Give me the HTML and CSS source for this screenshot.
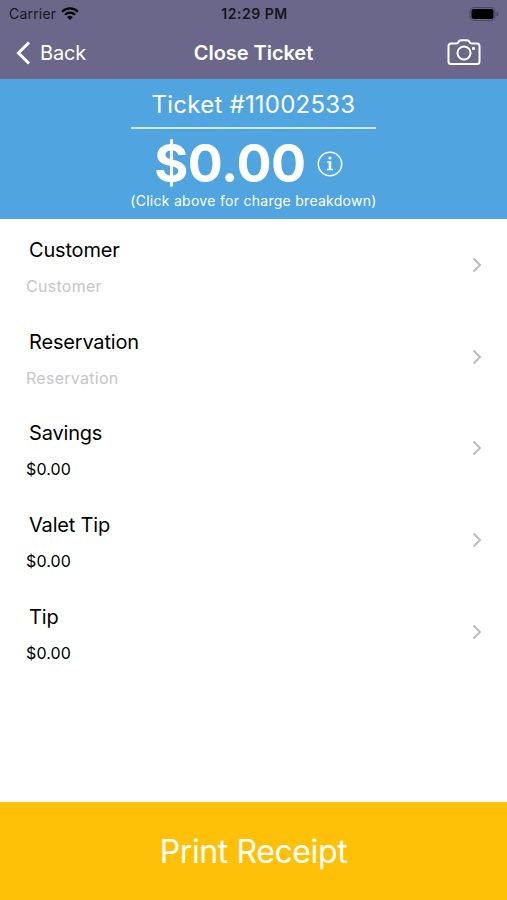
FILE: index.html
```html
<!DOCTYPE html>
<html lang="en">
<head>
<meta charset="utf-8">
<title>Close Ticket</title>
<link rel="stylesheet" href="styles.css">
</head>
<body>
<div class="app">
  <header class="top">
    <div class="status">
      <div class="carrier"><span>Carrier</span>
        <svg width="18" height="13" viewBox="0 0 18 13"><path d="M9 13 6.2 10.2a4 4 0 0 1 5.6 0z"/><path class="arc" d="M4 7.7a7.1 7.1 0 0 1 10 0M1.1 4.7a11.2 11.2 0 0 1 15.8 0"/></svg>
      </div>
      <span class="time">12:29 PM</span>
      <svg class="battery" width="31" height="14" viewBox="0 0 31 14"><rect class="case" x="1" y=".5" width="25" height="13" rx="4"/><rect x="2.500" y="2" width="22" height="10" rx="2.5"/><path class="cap" d="M27.500 4.5c2.800.9 2.800 4.1 0 5z"/></svg>
    </div>
    <nav class="nav">
      <div class="back"><svg width="15" height="24" viewBox="0 0 15 24"><path d="M13 1.5 2.5 12 13 22.5"/></svg><span>Back</span></div>
      <h1>Close Ticket</h1>
      <svg class="camera" width="34" height="27" viewBox="0 0 34 27"><path d="M4 4.500h5.500c1 0 1.500-.5 2-1.500.6-1.200 1.200-1.800 2.500-1.800h6c1.300 0 1.900.6 2.500 1.800.5 1 1 1.500 2 1.500H30A2.500 2.500 0 0 1 32.500 7v15.500A2.500 2.500 0 0 1 30 25H4a2.500 2.500 0 0 1-2.500-2.500V7A2.500 2.500 0 0 1 4 4.500z"/><circle cx="17" cy="14" r="6.500"/><rect class="dot" x="25" y="8" width="3" height="3" rx="1"/></svg>
    </nav>
  </header>
  <section class="ticket">
    <div class="number">Ticket #11002533</div>
    <div class="amount"><span>$0.00</span><svg width="26" height="26" viewBox="0 0 26 26"><circle cx="13" cy="13" r="11.700"/><path d="M10.300 11H12.800V18M10 18.500h6"/><path class="stem" d="M13 10.300V18.500"/><circle class="dot" cx="13" cy="7" r="1.600"/></svg></div>
    <div class="hint">(Click above for charge breakdown)</div>
  </section>
  <main class="list">
    <div class="row"><div><h2>Customer</h2><p class="empty">Customer</p></div><svg class="chevron" viewBox="0 0 10 16"><path d="m1.500 1.500 6.500 6.500-6.500 6.500"/></svg></div>
    <div class="row"><div><h2>Reservation</h2><p class="empty">Reservation</p></div><svg class="chevron" viewBox="0 0 10 16"><path d="m1.500 1.500 6.500 6.500-6.500 6.500"/></svg></div>
    <div class="row"><div><h2>Savings</h2><p>$0.00</p></div><svg class="chevron" viewBox="0 0 10 16"><path d="m1.500 1.500 6.500 6.500-6.500 6.500"/></svg></div>
    <div class="row"><div><h2>Valet Tip</h2><p>$0.00</p></div><svg class="chevron" viewBox="0 0 10 16"><path d="m1.500 1.500 6.500 6.500-6.500 6.500"/></svg></div>
    <div class="row"><div><h2>Tip</h2><p>$0.00</p></div><svg class="chevron" viewBox="0 0 10 16"><path d="m1.500 1.500 6.500 6.500-6.500 6.500"/></svg></div>
  </main>
  <button class="print">Print Receipt</button>
</div>
</body>
</html>
```
FILE: styles.css
```css
* { box-sizing: border-box; }
body { margin: 0; font-family: Inter, "Liberation Sans", sans-serif; color: #000; }
h1, h2, p { margin: 0; font-weight: 400; }
svg { display: block; flex: none; }
.app { width: 507px; height: 900px; display: flex; flex-direction: column; background: #fff; }
.top { height: 79px; background: #6a678a; }
.status { height: 27px; padding: 0 7px 0 9px; display: grid; grid-template-columns: 1fr auto 1fr; align-items: center; font-size: 14px; color: #16151c; }
.carrier { display: flex; align-items: center; gap: 5px; letter-spacing: .2px; }
.arc { fill: none; stroke: #000; stroke-width: 2.300; }
.time { font-weight: 600; letter-spacing: .5px; }
.battery { justify-self: end; }
.case { fill: none; stroke: #4b4961; }
.cap { fill: #4b4961; }
.nav { height: 51px; padding: 0 26px 0 16px; display: grid; grid-template-columns: 1fr auto 1fr; align-items: center; color: #fff; font-size: 20px; }
.nav svg { fill: none; stroke: #fff; stroke-width: 2; }
.back { display: flex; align-items: center; gap: 9px; letter-spacing: -.2px; }
.back svg { stroke-width: 3; }
.nav h1 { font-size: 20px; font-weight: 600; letter-spacing: -.05px; padding-left: 10px; }
.nav .camera { justify-self: end; }
.nav .dot { fill: #fff; stroke: none; }
.ticket { height: 140px; background: #50a5e0; color: #fff; display: flex; flex-direction: column; align-items: center; }
.number { width: 245px; height: 50px; line-height: 51px; border-bottom: 2px solid #d0e8f8; text-align: center; font-size: 24px; letter-spacing: .23px; white-space: nowrap; }
.amount { height: 54px; margin: 8px 10px 0 0; display: flex; align-items: center; gap: 11px; font-size: 52px; font-weight: 700; line-height: 54px; letter-spacing: -.4px; }
.amount svg { fill: none; stroke: #fff; stroke-width: 1.500; }
.amount .stem { stroke-width: 2.500; }
.amount .dot { fill: #fff; stroke: none; }
.hint { font-size: 14px; line-height: 20px; letter-spacing: .28px; white-space: nowrap; }
.list { flex: 1; }
.row { height: 91.700px; padding: 17px 25px 0 26px; display: flex; justify-content: space-between; }
.row h2 { font-size: 20px; line-height: 28px; letter-spacing: -.18px; padding-left: 3px; }
.row p { font-size: 16px; line-height: 22px; letter-spacing: .15px; margin-top: 11px; }
.row .empty { color: #c5c5c7; letter-spacing: .28px; }
.chevron { width: 10px; height: 16px; margin-top: 21px; fill: none; stroke: #bcbcc0; stroke-width: 2; }
.print { height: 98px; border: 0; padding: 2px 0 0; background: #ffc107; color: #fff; font: 32px/96px Inter, sans-serif; letter-spacing: -.4px; }
```
